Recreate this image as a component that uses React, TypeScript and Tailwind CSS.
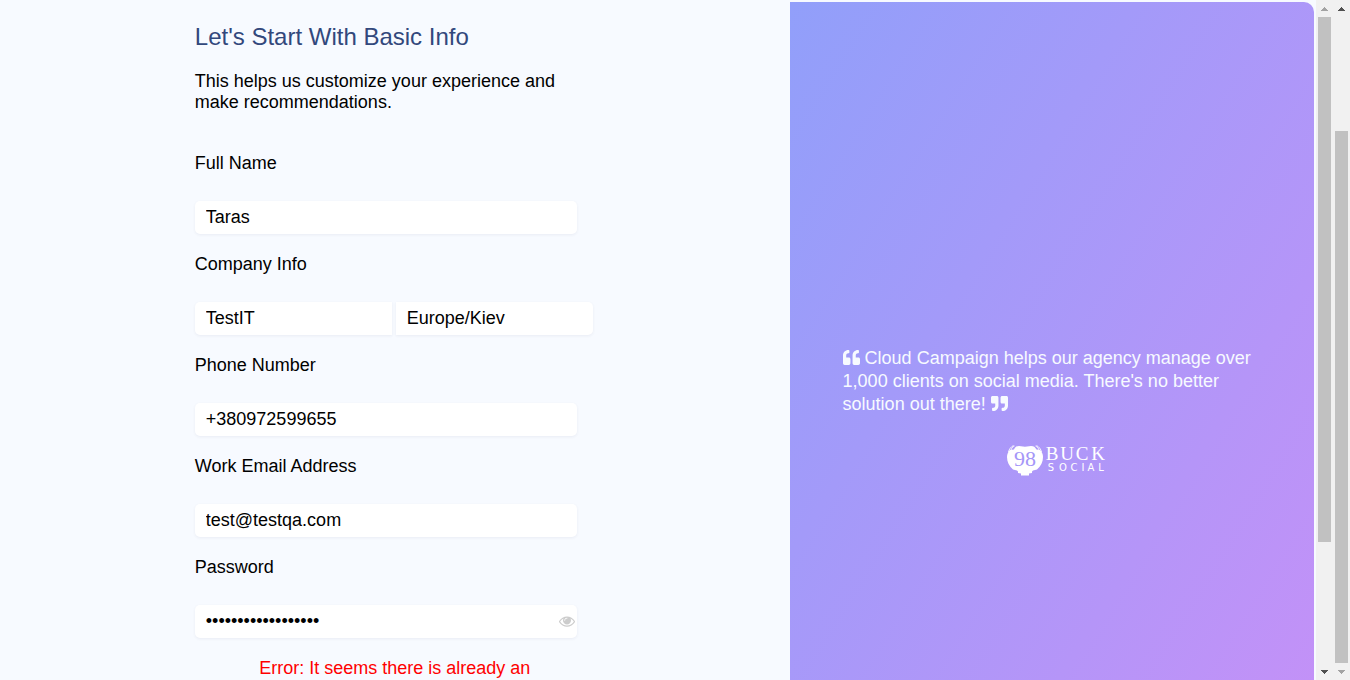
import type { InputHTMLAttributes, ReactNode } from "react";
import { FaQuoteLeft, FaQuoteRight } from "react-icons/fa";

const fieldStyle =
  "h-[33px] bg-white px-[11px] text-[18px] text-black shadow-[0_1px_3px_rgba(50,50,93,0.07)] outline-none";

function Field({ id, label, children }: { id: string; label: string; children: ReactNode }) {
  return (
    <div className="mb-5">
      <label htmlFor={id} className="mb-[27px] block leading-[21px]">
        {label}
      </label>
      {children}
    </div>
  );
}

function TextInput(props: InputHTMLAttributes<HTMLInputElement>) {
  return <input {...props} className={`${fieldStyle} w-[382px] rounded-[5px]`} />;
}

function EyeIcon() {
  return (
    <svg viewBox="0 0 1792 1792" className="h-4 w-4 fill-[#cccccc]" aria-hidden="true">
      <path d="M1664 960q-152-236-381-353 61 104 61 225 0 185-131.5 316.5t-316.5 131.5-316.5-131.5-131.5-316.5q0-121 61-225-229 117-381 353 133 205 333.5 326.5t434.5 121.5 434.5-121.5 333.5-326.5zm-720-384q0-20-14-34t-34-14q-125 0-214.5 89.5t-89.5 214.5q0 20 14 34t34 14 34-14 14-34q0-86 61-147t147-61q20 0 34-14t14-34zm848 384q0 34-20 69-140 230-376.5 368.5t-499.5 138.5-499.5-139-376.5-368q-20-35-20-69t20-69q140-229 376.5-368t499.5-139 499.5 139 376.5 368q20 35 20 69z" />
    </svg>
  );
}

const buck: [string, number][] = [["B", 46], ["U", 61], ["C", 76], ["K", 92]];
const social: [string, number][] = [["S", 45], ["O", 57], ["C", 68], ["I", 77], ["A", 85], ["L", 95]];

function BuckLogo() {
  return (
    <svg viewBox="-8 0 108 34" className="h-[34px] w-[108px]" role="img" aria-label="98 Buck Social">
      <path
        fill="#fff"
        d="M8 5.500C9 3 11 2 13 2L19 2.800 25 2C28 2 29 3 30.500 5.500L34 6C36 8 37 10 37 13 37 18 35 22 31 25.500L27 26.500 26 27.500V29L23 29.500V31.500H15V29.500L12 29V27.500L11 26.500 7 25.500C3 22 1 18 1 13 1 10 2 8 4 6Z"
      />
      <path fill="none" stroke="#fff" strokeWidth="0.9" d="M2.500 8C3.200 5 4.800 3 7.500 1.500M5 6C5.500 4.200 6.500 3 8.500 2M35.500 8C34.800 5 33.200 3 30.500 1.500M33 6C32.500 4.200 31.500 3 29.500 2" />
      <text x="19" y="22" textAnchor="middle" fontSize="22" fill="#a596f8" fontFamily="Liberation Serif, serif">
        98
      </text>
      {buck.map(([letter, x]) => (
        <text key={x} x={x} y="16" textAnchor="middle" fontSize="19" fill="#fff" fontFamily="Liberation Serif, serif">
          {letter}
        </text>
      ))}
      {social.map(([letter, x]) => (
        <text key={x} x={x} y="27" textAnchor="middle" fontSize="10" fill="#fff" fontFamily="DejaVu Sans, sans-serif">
          {letter}
        </text>
      ))}
    </svg>
  );
}

function Arrow({ down = false, active = false }: { down?: boolean; active?: boolean }) {
  return (
    <svg viewBox="0 0 17 17" className="h-[17px] w-[17px] shrink-0" aria-hidden="true" shapeRendering="crispEdges">
      <path d={down ? "M5 7h7v1h-1v1h-1v1H9v1H8v-1H7V9H6V8H5z" : "M8 7h1v1h1v1h1v1h1v1H5v-1h1V9h1V8h1z"} fill={active ? "#505050" : "#a3a3a3"} />
    </svg>
  );
}

function Scrollbar({ before, thumb, after, up, down }: { before: number; thumb: number; after: number; up?: boolean; down?: boolean }) {
  return (
    <div className="flex h-full w-[17px] shrink-0 flex-col bg-[#f1f1f1]" aria-hidden="true">
      <Arrow active={up} />
      <div className="flex min-h-0 flex-1 flex-col px-0.5">
        <div style={{ flex: before }} />
        <div className="bg-[#c1c1c1]" style={{ flex: thumb }} />
        <div style={{ flex: after }} />
      </div>
      <Arrow down active={down} />
    </div>
  );
}

export default function App() {
  return (
    <div className="flex h-screen overflow-hidden bg-[#f7faff] font-['Liberation_Sans',Arial,sans-serif] text-[18px] text-black">
      <main className="flex min-w-0 flex-1 overflow-hidden">
        <section className="w-3/5 shrink-0">
          <form className="mx-auto w-[400px] pt-[22px]" onSubmit={(e) => e.preventDefault()}>
            <h1 className="mb-[19px] text-[24px] leading-[30px] text-[#32487c]">Let's Start With Basic Info</h1>
            <p className="mb-10 leading-[21px]">
              This helps us customize your experience and make recommendations.
            </p>
            <Field id="name" label="Full Name">
              <TextInput id="name" defaultValue="Taras" />
            </Field>
            <Field id="company" label="Company Info">
              <div className="flex gap-1">
                <input id="company" defaultValue="TestIT" className={`${fieldStyle} w-[197px] rounded-l-[5px]`} />
                <input aria-label="Time zone" defaultValue="Europe/Kiev" className={`${fieldStyle} w-[197px] rounded-r-[5px]`} />
              </div>
            </Field>
            <Field id="phone" label="Phone Number">
              <TextInput id="phone" type="tel" defaultValue="+380972599655" />
            </Field>
            <Field id="email" label="Work Email Address">
              <TextInput id="email" type="email" defaultValue="test@testqa.com" />
            </Field>
            <Field id="password" label="Password">
              <div className="relative w-[382px]">
                <TextInput id="password" type="password" defaultValue="passwordpassword12" />
                <button type="button" aria-label="Show password" className="absolute top-2 right-0.5">
                  <EyeIcon />
                </button>
              </div>
            </Field>
            <p role="alert" className="text-center leading-[21px] text-[#ff0000]">
              Error: It seems there is already an
            </p>
          </form>
        </section>
        <aside className="w-2/5 shrink-0 pt-0.5 pr-0.5">
          <div className="flex h-[820px] flex-col items-center justify-center rounded-r-[10px] bg-linear-[122deg,#919ffa,#c790f7] px-[53px] text-[#f7faff]">
            <blockquote className="w-full leading-[23px]">
              <FaQuoteLeft className="inline h-[17px] w-[17px] align-[-2px]" /> Cloud Campaign helps our agency manage over 1,000
              clients on social media. There's no better solution out there!{" "}
              <FaQuoteRight className="inline h-[17px] w-[17px] align-[-2px]" />
            </blockquote>
            <div className="mt-7">
              <BuckLogo />
            </div>
          </div>
        </aside>
      </main>
      <Scrollbar before={0} thumb={525} after={121} down />
      <Scrollbar before={114} thumb={532} after={0} up />
    </div>
  );
}
